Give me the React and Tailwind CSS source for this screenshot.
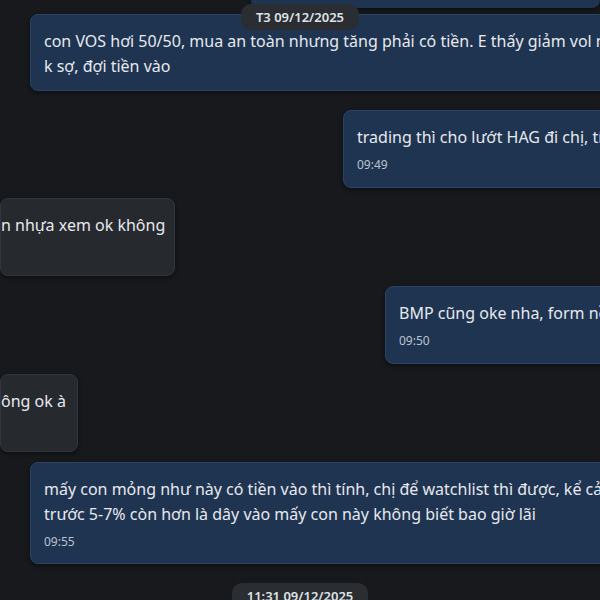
import React from 'react';

const font = { fontFamily: '"Noto Sans", "Segoe UI", Roboto, sans-serif' };

// Bubble gửi đi (xanh)
const OutBubble = ({ lines, time, className = '' }) => (
    <div className={`shrink-0 rounded-lg border border-[#2b4262] bg-[#1f3451] px-[13px] pt-[14px] text-[16px] leading-[25px] text-[#e6e9ee] shadow-[0_2px_4px_rgba(0,0,0,0.45)] ${className}`}>
        {lines.map((l, i) => (
            <div key={i} className="whitespace-nowrap">{l}</div>
        ))}
        {time && <div className="mt-[7px] text-[12px] leading-[16px] text-[#b9c3d0]">{time}</div>}
    </div>
);

// Bubble nhận (xám) - phần bên trái bị cắt khỏi khung
const InBubble = ({ text, width }) => (
    <div className={`shrink-0 rounded-lg border border-[#33363c] bg-[#26292e] pr-[14px] pt-[14px] pb-[14px] text-[16px] leading-[25px] text-[#e6e9ee] shadow-[0_2px_4px_rgba(0,0,0,0.45)] ${width}`}>
        <div className="whitespace-nowrap text-right">{text}</div>
        <div className="mt-[7px] h-[16px]" />
    </div>
);

const DatePill = ({ children, className = '' }) => (
    <div className={`flex justify-center ${className}`}>
        <div className="rounded-[10px] bg-[#2a2d32] px-[15px] py-[4px] text-[13px] font-semibold leading-[18px] text-[#dfe3e8]">
            {children}
        </div>
    </div>
);

export default function App() {
    return (
        <div style={font} className="h-[600px] w-[600px] overflow-hidden bg-[#18191d]">
            <div className="flex flex-col">
                {/* phần cuối tin nhắn trước */}
                <div className="h-[8px]">
                    <div className="ml-[251px] h-[8px] rounded-b-lg bg-[#1f3451] shadow-[0_2px_4px_rgba(0,0,0,0.45)]" />
                </div>

                <div className="relative">
                    <div className="flex pl-[30px] pt-[6px]">
                        <OutBubble
                            className="w-[640px] pb-[11px]"
                            lines={[
                                'con VOS hơi 50/50, mua an toàn nhưng tăng phải có tiền. E thấy giảm vol nên',
                                'k sợ, đợi tiền vào',
                            ]}
                        />
                    </div>
                    <DatePill className="absolute left-0 right-0 top-[-4px]">T3 09/12/2025</DatePill>
                </div>

                <div className="flex pl-[343px] pt-[19px]">
                    <OutBubble className="w-[320px] pb-[14px]" lines={['trading thì cho lướt HAG đi chị, tích lũy']} time="09:49" />
                </div>

                <div className="flex pt-[10px]">
                    <InBubble text="n nhựa xem ok không" width="w-[175px]" />
                </div>

                <div className="flex pl-[385px] pt-[10px]">
                    <OutBubble className="w-[300px] pb-[14px]" lines={['BMP cũng oke nha, form nền đẹp']} time="09:50" />
                </div>

                <div className="flex pt-[10px]">
                    <InBubble text="ông ok à" width="w-[78px]" />
                </div>

                <div className="flex pl-[30px] pt-[10px]">
                    <OutBubble
                        className="w-[640px] pb-[13px]"
                        lines={[
                            'mấy con mỏng như này có tiền vào thì tính, chị để watchlist thì được, kể cả',
                            'trước 5-7% còn hơn là dây vào mấy con này không biết bao giờ lãi',
                        ]}
                        time="09:55"
                    />
                </div>

                <DatePill className="pt-[19px]">11:31 09/12/2025</DatePill>
            </div>
        </div>
    );
}
